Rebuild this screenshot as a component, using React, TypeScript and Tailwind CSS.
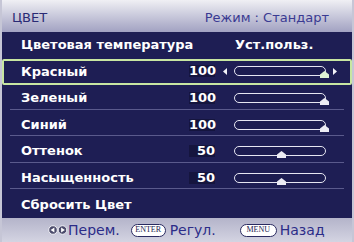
import React from "react";

interface Row {
  label: string;
  value?: string;
  level?: number;
  right?: string;
}

const rows: Row[] = [
  { label: "Цветовая температура", right: "Уст.польз." },
  { label: "Красный", value: "100", level: 100 },
  { label: "Зеленый", value: "100", level: 100 },
  { label: "Синий", value: "100", level: 100 },
  { label: "Оттенок", value: "50", level: 50 },
  { label: "Насыщенность", value: "50", level: 50 },
  { label: "Сбросить Цвет" },
];

const FONT = { fontFamily: '"DejaVu Sans", Verdana, sans-serif' };

function Slider({ level, active }: { level: number; active: boolean }) {
  return (
    <div className="relative h-[10px] w-[92px] rounded-full border-[1.5px] border-[#e6e6f2] bg-[#1c1c50]">
      {/* бегунок */}
      <svg
        width="9"
        height="7"
        viewBox="0 0 9 7"
        className="absolute top-[4px]"
        style={{ left: `${0.86 * level - 1.5}px` }}
      >
        <path d="M4.5 0 L9 3.5 L9 7 L0 7 L0 3.5 Z" fill={active ? "#dff2d4" : "#ececf4"} />
      </svg>
    </div>
  );
}

function Arrow({ dir, show }: { dir: "l" | "r"; show: boolean }) {
  return (
    <svg width="4" height="7" viewBox="0 0 4 7" className={show ? "" : "invisible"}>
      <path d={dir === "l" ? "M0 3.5 L4 0 L4 7 Z" : "M4 3.5 L0 0 L0 7 Z"} fill="#f4f4f8" />
    </svg>
  );
}

function MenuRow({ row, active, line }: { row: Row; active: boolean; line: boolean }) {
  return (
    <div
      className={`flex flex-1 items-stretch rounded-[2px] border-2 ${active ? "border-[#c8e6a2]" : "border-transparent"}`}
    >
      <div
        className={`mx-[6px] flex flex-1 items-center border-b pl-[11px] pr-[7px] ${line ? "border-[#5a5a8c]" : "border-transparent"}`}
      >
        <span className="flex-1 text-[13px] font-bold text-white">{row.label}</span>
        {row.right && (
          <span className="w-[102px] text-[13px] font-bold text-white">{row.right}</span>
        )}
        {row.value && (
          <div className="flex items-center">
            <span className="mr-[8px] h-[12px] w-[26px] bg-[#15153e] text-right text-[13px] font-bold leading-[12px] text-white">
              {row.value}
            </span>
            <Arrow dir="l" show={active} />
            <span className="w-[7px]" />
            <Slider level={row.level ?? 0} active={active} />
            <span className="w-[7px]" />
            <Arrow dir="r" show={active} />
          </div>
        )}
      </div>
    </div>
  );
}

function Pill({ text, w }: { text: string; w: string }) {
  return (
    <span
      className={`flex h-[13px] ${w} items-center justify-center rounded-full border border-[#2a2a60] bg-white text-[8px] leading-none text-[#1c1c50]`}
      style={{ fontFamily: '"Liberation Serif", serif' }}
    >
      {text}
    </span>
  );
}

export default function App() {
  return (
    <div className="flex h-[242px] w-[354px] flex-col bg-[#c6c6d6] px-[2px]" style={FONT}>
      {/* заголовок */}
      <div className="flex h-[32px] items-end justify-between bg-gradient-to-b from-[#f0f0f4] to-[#a2a2c2] pb-[5px] pl-[10px] pr-[23px] text-[13px]">
        <span className="text-[#2a2a74]">ЦВЕТ</span>
        <span className="text-[#3a3a92]">Режим : Стандарт</span>
      </div>

      {/* пункты меню */}
      <div className="flex flex-1 flex-col bg-[#1e1e54]">
        {rows.map((r, i) => (
          <MenuRow key={r.label} row={r} active={i === 1} line={i >= 2 && i <= 5} />
        ))}
      </div>

      {/* подсказки */}
      <div className="flex h-[24px] items-center bg-gradient-to-b from-[#b4b4ca] to-[#d4d4e2] pl-[46px] text-[14px] text-[#2c2c88]">
        <svg width="20" height="10" viewBox="0 0 20 10">
          <circle cx="5" cy="5" r="4.3" fill="#4c4c6c" stroke="#f0f0f6" strokeWidth="1" />
          <path d="M2.6 5 L6.4 2.5 L6.4 7.5 Z" fill="#fff" />
          <circle cx="14.5" cy="5" r="4.3" fill="#4c4c6c" stroke="#f0f0f6" strokeWidth="1" />
          <path d="M16.9 5 L13.1 2.5 L13.1 7.5 Z" fill="#fff" />
        </svg>
        <span>Перем.</span>
        <span className="w-[11px]" />
        <Pill text="ENTER" w="w-[35px]" />
        <span className="ml-[4px]">Регул.</span>
        <span className="w-[24px]" />
        <Pill text="MENU" w="w-[37px]" />
        <span className="ml-[3px]">Назад</span>
      </div>
    </div>
  );
}
